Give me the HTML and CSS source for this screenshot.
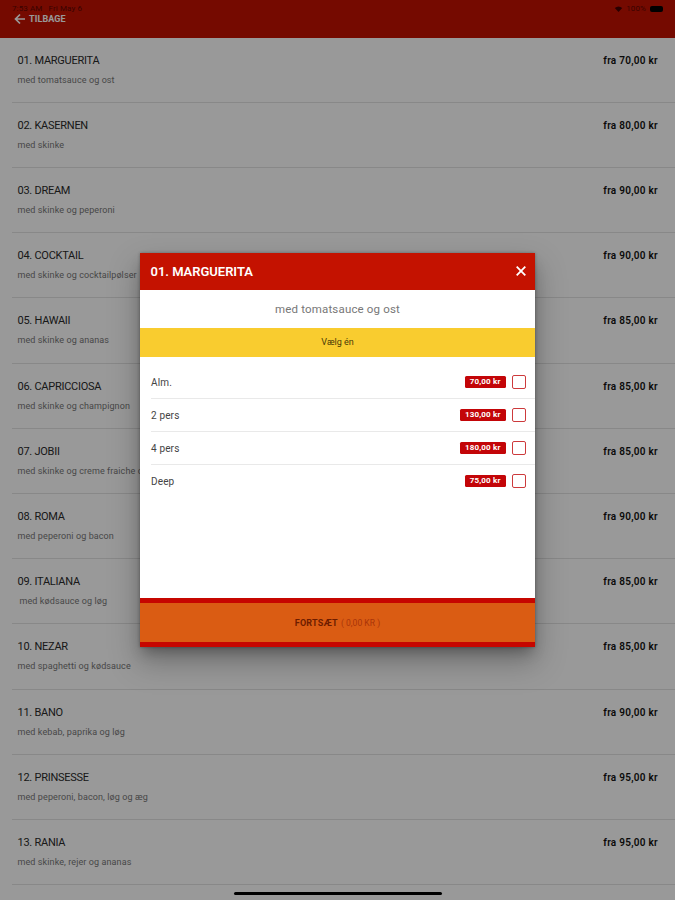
FILE: index.html
```html
<!DOCTYPE html>
<html lang="da">
<head>
<meta charset="utf-8">
<title>Menu</title>
<link rel="stylesheet" href="styles.css">
</head>
<body>
<div class="screen">
  <header class="topbar">
    <div class="status">
      <span class="time">7:53 AM</span><span class="date">Fri May 6</span>
      <svg class="wifi" viewBox="0 0 10 8"><path d="M0 2.5Q5-1.5 10 2.5L5 8Z"/></svg>
      <span class="percent">100%</span><i class="battery"></i>
    </div>
    <div class="back">
      <svg viewBox="0 0 12 12"><path d="M11 6H1.5M6 1.5 1.5 6 6 10.5"/></svg>
      <span>TILBAGE</span>
    </div>
  </header>
  <main class="menu">
    <div class="dish"><div><h2>01. MARGUERITA</h2><p>med tomatsauce og ost</p></div><b>fra 70,00 kr</b></div>
    <div class="dish"><div><h2>02. KASERNEN</h2><p>med skinke</p></div><b>fra 80,00 kr</b></div>
    <div class="dish"><div><h2>03. DREAM</h2><p>med skinke og peperoni</p></div><b>fra 90,00 kr</b></div>
    <div class="dish"><div><h2>04. COCKTAIL</h2><p>med skinke og cocktailpølser</p></div><b>fra 90,00 kr</b></div>
    <div class="dish"><div><h2>05. HAWAII</h2><p>med skinke og ananas</p></div><b>fra 85,00 kr</b></div>
    <div class="dish"><div><h2>06. CAPRICCIOSA</h2><p>med skinke og champignon</p></div><b>fra 85,00 kr</b></div>
    <div class="dish"><div><h2>07. JOBII</h2><p>med skinke og creme fraiche og</p></div><b>fra 85,00 kr</b></div>
    <div class="dish"><div><h2>08. ROMA</h2><p>med peperoni og bacon</p></div><b>fra 90,00 kr</b></div>
    <div class="dish"><div><h2>09. ITALIANA</h2><p class="indented">med kødsauce og løg</p></div><b>fra 85,00 kr</b></div>
    <div class="dish"><div><h2>10. NEZAR</h2><p>med spaghetti og kødsauce</p></div><b>fra 85,00 kr</b></div>
    <div class="dish"><div><h2>11. BANO</h2><p>med kebab, paprika og løg</p></div><b>fra 90,00 kr</b></div>
    <div class="dish"><div><h2>12. PRINSESSE</h2><p>med peperoni, bacon, løg og æg</p></div><b>fra 95,00 kr</b></div>
    <div class="dish"><div><h2>13. RANIA</h2><p>med skinke, rejer og ananas</p></div><b>fra 95,00 kr</b></div>
  </main>
  <div class="overlay">
    <section class="modal">
      <div class="modal-head">
        <h1>01. MARGUERITA</h1>
        <svg class="close" viewBox="0 0 10 10"><path d="M.7.7l8.6 8.6M9.3.7.7 9.3"/></svg>
      </div>
      <p class="description">med tomatsauce og ost</p>
      <div class="choose">Vælg én</div>
      <div class="options">
        <div class="option"><span>Alm.</span><em>70,00 kr</em><i></i></div>
        <div class="option"><span>2 pers</span><em>130,00 kr</em><i></i></div>
        <div class="option"><span>4 pers</span><em>180,00 kr</em><i></i></div>
        <div class="option"><span>Deep</span><em>75,00 kr</em><i></i></div>
      </div>
      <div class="continue"><strong>FORTSÆT</strong><span>( 0,00 KR )</span></div>
    </section>
  </div>
  <div class="home-indicator"></div>
</div>
</body>
</html>
```
FILE: styles.css
```css
* { box-sizing: border-box; }
body, h1, h2, p { margin: 0; }
body { font-family: Roboto, sans-serif; background: #fff; overflow: hidden; }
.screen { position: relative; width: 675px; height: 900px; overflow: hidden; }

.topbar { height: 37.5px; background: #c31200; padding: 4px 12px 0; }
.status { display: flex; align-items: center; height: 9px; font-size: 8px; line-height: 9px; letter-spacing: .12px; color: #600400; }
.date { margin-left: 6px; }
.wifi { width: 9px; height: 6px; margin-left: auto; fill: #400; }
.percent { margin: 0 4px 0 3px; }
.battery { width: 13px; height: 6px; border-radius: 2px; background: #000; }
.back { display: flex; align-items: center; gap: 3px; height: 12px; padding-left: 2px; font-size: 9px; font-weight: 700; color: #fff; letter-spacing: .1px; }
.back svg { width: 12px; height: 12px; fill: none; stroke: #fff; stroke-width: 1.7; }

.dish { display: flex; justify-content: space-between; height: 65.23px; margin-left: 12px; padding: 15px 17px 0 5.5px; border-bottom: 1px solid #e3e3e3; }
.dish h2 { font-size: 11px; line-height: 15px; font-weight: 400; letter-spacing: -.26px; color: #2a2a2a; white-space: nowrap; }
.dish p { margin-top: 6px; font-size: 9px; line-height: 12px; letter-spacing: .1px; color: #777; white-space: nowrap; }
.dish p.indented { padding-left: 2px; }
.dish b { font-size: 10px; line-height: 16px; font-weight: 600; color: #111; letter-spacing: .27px; }

.overlay { position: absolute; inset: 0; display: grid; place-items: center; background: rgba(0, 0, 0, .4); }
.modal { display: flex; flex-direction: column; width: 395px; height: 394px; background: #fff; box-shadow: 0 8px 12px -3px rgba(0, 0, 0, .25), 0 14px 28px 2px rgba(0, 0, 0, .25), 0 0 3px rgba(0, 0, 0, .3); }
.modal-head { display: flex; align-items: center; justify-content: space-between; height: 36.5px; padding: 0 9.5px 0 10.5px; background: #c41200; color: #fff; }
.modal-head h1 { font-size: 13px; font-weight: 600; letter-spacing: -.03px; }
.close { width: 10px; height: 10px; fill: none; stroke: #fff; stroke-width: 1.8; }
.description { height: 38px; line-height: 38px; font-size: 11.5px; letter-spacing: .17px; text-align: center; color: #777; }
.choose { height: 29.5px; line-height: 29.5px; font-size: 9px; text-align: center; color: #4a3b08; background: #f9cc2f; }
.options { flex: 1; padding: 8.5px 0 0 11px; }
.option { display: flex; align-items: center; height: 33px; padding-right: 9.5px; border-bottom: 1px solid #e9e9e9; font-size: 10px; letter-spacing: .15px; color: #444; }
.option:last-child { border-bottom: 0; }
.option span { padding-top: 1px; }
.option em { margin-left: auto; height: 12px; padding: 0 5px; border-radius: 1.5px; background: #c30508; color: #fff; font-size: 8px; font-style: normal; font-weight: 700; line-height: 12px; letter-spacing: .16px; }
.option i { width: 14px; height: 14px; margin-left: 6px; border: 1px solid #cd3a3c; border-radius: 2px; }
.continue { display: flex; align-items: center; justify-content: center; gap: 3px; height: 49px; border: solid #c60600; border-width: 5px 0; background: #da5c13; color: #6e1c00; font-size: 9px; letter-spacing: .2px; }
.continue span { color: #a93409; font-size: 8.5px; letter-spacing: .05px; }
.home-indicator { position: absolute; left: 234px; bottom: 5px; width: 208px; height: 3px; border-radius: 2px; background: #000; }
```
